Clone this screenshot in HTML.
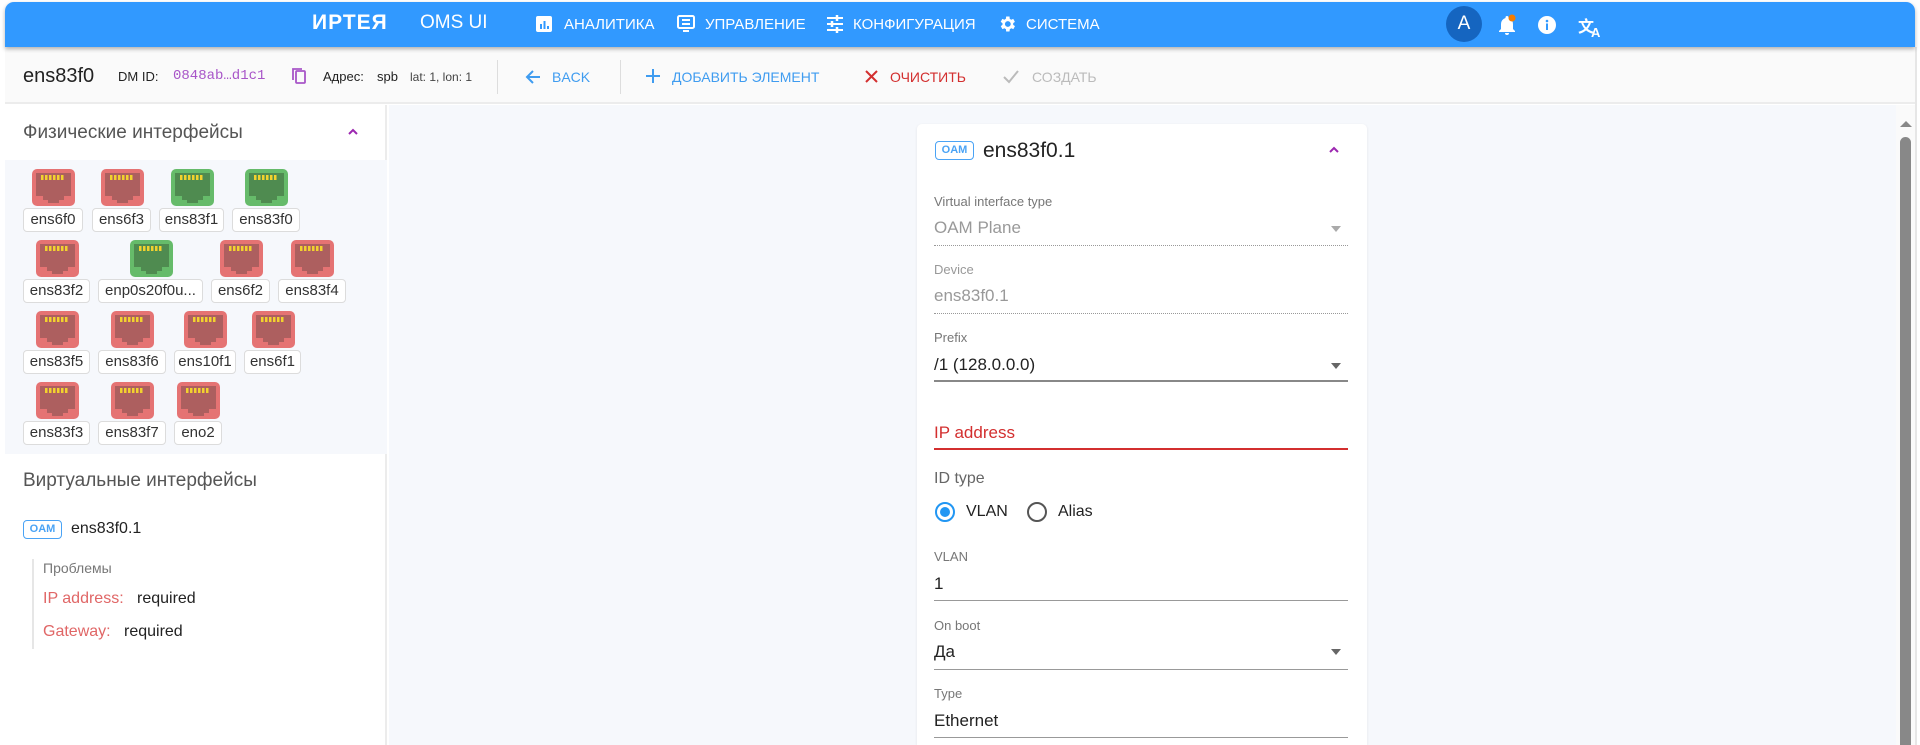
<!DOCTYPE html>
<html style="width:1920px;height:745px;overflow:hidden"><head><meta charset="utf-8"><style>
*{margin:0;padding:0;box-sizing:border-box}
body{width:1920px;height:745px;overflow:hidden;background:#fff;font-family:"Liberation Sans","Noto Sans CJK SC",sans-serif;position:relative;color:#222}
.a{position:absolute;white-space:nowrap}
.top{left:5px;top:2px;width:1910px;height:45px;background:#3199ff;border-radius:9px 9px 0 0;box-shadow:0 2px 4px rgba(0,0,0,.3);z-index:3}
.top .a{color:#fff}
.nav{font-size:15px;top:14px}
.tb{left:5px;top:47px;width:1910px;height:57px;background:#fafafa;border-bottom:2px solid #ececec}
.left{left:5px;top:105px;width:382px;height:640px;background:#fff;border-right:2px solid #ececec}
.main{left:389px;top:105px;width:1507px;height:640px;background:#f6f8fc}
.lbl{position:absolute;height:24px;border:1px solid #dcdcdc;border-radius:4px;background:#fff;font-size:15px;line-height:22px;text-align:center;color:#333}
.card{left:917px;top:124px;width:450px;height:621px;background:#fff;border-radius:5px 5px 0 0;box-shadow:0 1px 3px rgba(0,0,0,.08)}
.fl{font-size:13px;color:#777}
.fv{font-size:17px;color:#222}
.ln{position:absolute;left:934px;width:414px;height:1px;background:#999}
.badge{border:1px solid #4aa3f5;color:#4aa3f5;border-radius:4px;font-size:11px;text-align:center;font-weight:bold}
</style></head><body>
<div class="a top">
 <div class="a" style="left:307px;top:9px;font-size:21px;font-weight:bold;letter-spacing:1px">ИРТЕЯ</div>
 <div class="a" style="left:415px;top:10px;font-size:19px">OMS UI</div>
 <svg class="a" style="left:530px;top:13px" width="18" height="18" viewBox="0 0 18 18"><rect x="1" y="1" width="16" height="16" rx="2" fill="#fff"/><rect x="5" y="9" width="2" height="5" fill="#3199ff"/><rect x="8.5" y="6" width="2" height="8" fill="#3199ff"/><rect x="12" y="11" width="2" height="3" fill="#3199ff"/></svg>
 <div class="a nav" style="left:559px">АНАЛИТИКА</div>
 <svg class="a" style="left:671px;top:12px" width="20" height="20" viewBox="0 0 20 20"><rect x="2" y="2" width="16" height="12" rx="1.5" fill="none" stroke="#fff" stroke-width="2"/><path d="M6 6h8M6 10h8M7 17h6" stroke="#fff" stroke-width="2"/></svg>
 <div class="a nav" style="left:700px">УПРАВЛЕНИЕ</div>
 <svg class="a" style="left:820px;top:12px" width="20" height="20" viewBox="0 0 20 20"><path d="M2 4h16M2 10h16M2 16h16" stroke="#fff" stroke-width="2"/><path d="M12 1v6M7 7v6M12 13v6" stroke="#fff" stroke-width="2.5"/></svg>
 <div class="a nav" style="left:848px">КОНФИГУРАЦИЯ</div>
 <svg class="a" style="left:992px;top:12px" width="20" height="20" viewBox="0 0 24 24"><path fill="#fff" d="M19.4 13a7.5 7.5 0 000-2l2.1-1.6-2-3.5-2.5 1a7 7 0 00-1.7-1L15 3h-4l-.4 2.9a7 7 0 00-1.7 1l-2.5-1-2 3.5L6.6 11a7.5 7.5 0 000 2l-2.1 1.6 2 3.5 2.5-1a7 7 0 001.7 1L11 21h4l.4-2.9a7 7 0 001.7-1l2.5 1 2-3.5zM13 15.5a3.5 3.5 0 110-7 3.5 3.5 0 010 7z"/></svg>
 <div class="a nav" style="left:1021px">СИСТЕМА</div>
 <div class="a" style="left:1441px;top:4px;width:36px;height:36px;border-radius:50%;background:#1565c0;font-size:19px;line-height:36px;text-align:center">A</div>
 <svg class="a" style="left:1492px;top:12px" width="20" height="22" viewBox="0 0 20 22"><path fill="#fff" d="M10 2a1.5 1.5 0 011.5 1.5v.5A6 6 0 0116 10v5l2 2v1H2v-1l2-2v-5a6 6 0 014.5-6v-.5A1.5 1.5 0 0110 2zM8 19h4a2 2 0 01-4 0z"/><circle cx="15" cy="4" r="3.5" fill="#f57c00"/></svg>
 <svg class="a" style="left:1532px;top:13px" width="20" height="20" viewBox="0 0 20 20"><circle cx="10" cy="10" r="9" fill="#fff"/><rect x="9" y="8.5" width="2" height="6.5" fill="#3199ff"/><circle cx="10" cy="6" r="1.3" fill="#3199ff"/></svg>
 <div class="a" style="left:1573px;top:11px;font-size:16px;font-weight:bold">文<span style="font-size:13px;position:relative;top:5px;left:-3px">A</span></div>
</div>
<div class="a tb"></div>
<div class="a" style="left:23px;top:65px;font-size:20px">ens83f0</div>
<div class="a" style="left:118px;top:69px;font-size:13px">DM ID:</div>
<div class="a" style="left:173px;top:68px;font-size:14px;color:#a855c8;font-family:'Liberation Mono',monospace">0848ab…d1c1</div>
<svg class="a" style="left:291px;top:67px" width="16" height="18" viewBox="0 0 16 18"><rect x="5" y="4" width="9" height="12" rx="1" fill="none" stroke="#a855c8" stroke-width="1.8"/><path d="M2 13V2h9" fill="none" stroke="#a855c8" stroke-width="1.8"/></svg>
<div class="a" style="left:323px;top:69px;font-size:13px">Адрес:</div>
<div class="a" style="left:377px;top:69px;font-size:13px">spb</div>
<div class="a" style="left:410px;top:70px;font-size:12px;color:#444">lat: 1, lon: 1</div>
<div class="a" style="left:497px;top:60px;width:1px;height:34px;background:#ddd"></div>
<div class="a" style="left:620px;top:60px;width:1px;height:34px;background:#ddd"></div>
<svg class="a" style="left:524px;top:68px" width="18" height="18" viewBox="0 0 18 18"><path d="M16 9H3M9 3L3 9l6 6" fill="none" stroke="#3f9cf0" stroke-width="2"/></svg>
<div class="a" style="left:552px;top:69px;font-size:14px;color:#3f9cf0">BACK</div>
<svg class="a" style="left:645px;top:68px" width="16" height="16" viewBox="0 0 16 16"><path d="M8 1v14M1 8h14" stroke="#3f9cf0" stroke-width="2"/></svg>
<div class="a" style="left:672px;top:69px;font-size:14px;color:#3f9cf0">ДОБАВИТЬ ЭЛЕМЕНТ</div>
<svg class="a" style="left:864px;top:69px" width="15" height="15" viewBox="0 0 15 15"><path d="M2 2l11 11M13 2L2 13" stroke="#d32f2f" stroke-width="2"/></svg>
<div class="a" style="left:890px;top:69px;font-size:14px;color:#d32f2f">ОЧИСТИТЬ</div>
<svg class="a" style="left:1003px;top:69px" width="16" height="15" viewBox="0 0 16 15"><path d="M1 8l5 5L15 2" fill="none" stroke="#bbb" stroke-width="2"/></svg>
<div class="a" style="left:1032px;top:69px;font-size:14px;color:#bbb">СОЗДАТЬ</div>

<div class="a left"></div>
<div class="a" style="left:5px;top:160px;width:382px;height:294px;background:#f6f8fc"></div>
<div class="a" style="left:23px;top:122px;font-size:19px;color:#555">Физические интерфейсы</div>
<svg class="a" style="left:347px;top:127px" width="12" height="10" viewBox="0 0 12 10"><path d="M2 7l4-4 4 4" fill="none" stroke="#9c27b0" stroke-width="2"/></svg>
<div id="ifs"></div>
<div class="a" style="left:23px;top:470px;font-size:19px;color:#555">Виртуальные интерфейсы</div>
<div class="a badge" style="left:23px;top:520px;width:39px;height:19px;line-height:17px">OAM</div>
<div class="a" style="left:71px;top:520px;font-size:16px">ens83f0.1</div>
<div class="a" style="left:32px;top:559px;width:2px;height:90px;background:#e6e6e6"></div>
<div class="a" style="left:43px;top:560px;font-size:14px;color:#777">Проблемы</div>
<div class="a" style="left:43px;top:590px;font-size:16px;color:#e06666">IP address:</div>
<div class="a" style="left:137px;top:590px;font-size:16px">required</div>
<div class="a" style="left:43px;top:623px;font-size:16px;color:#e06666">Gateway:</div>
<div class="a" style="left:124px;top:623px;font-size:16px">required</div>

<div class="a main"></div>
<div class="a card"></div>
<div class="a badge" style="left:935px;top:141px;width:39px;height:19px;line-height:17px">OAM</div>
<div class="a" style="left:983px;top:139px;font-size:21px">ens83f0.1</div>
<svg class="a" style="left:1328px;top:145px" width="12" height="10" viewBox="0 0 12 10"><path d="M2 7l4-4 4 4" fill="none" stroke="#9c27b0" stroke-width="2"/></svg>
<div class="a fl" style="left:934px;top:194px">Virtual interface type</div>
<div class="a fv" style="left:934px;top:218px;color:#999">OAM Plane</div>
<div class="a" style="left:1331px;top:226px;border:5px solid transparent;border-top:6px solid #aaa"></div>
<div class="ln" style="top:245px;background:none;border-top:1px dotted #999"></div>
<div class="a fl" style="left:934px;top:262px;color:#999">Device</div>
<div class="a fv" style="left:934px;top:286px;color:#999">ens83f0.1</div>
<div class="ln" style="top:313px;background:none;border-top:1px dotted #999"></div>
<div class="a fl" style="left:934px;top:330px">Prefix</div>
<div class="a fv" style="left:934px;top:355px">/1 (128.0.0.0)</div>
<div class="a" style="left:1331px;top:363px;border:5px solid transparent;border-top:6px solid #666"></div>
<div class="ln" style="top:380px;height:2px;background:#888"></div>
<div class="a fv" style="left:934px;top:423px;color:#d32f2f">IP address</div>
<div class="ln" style="top:448px;height:2px;background:#d32f2f"></div>
<div class="a" style="left:934px;top:470px;font-size:16px;color:#666">ID type</div>
<div class="a" style="left:935px;top:502px;width:20px;height:20px;border:2px solid #2196f3;border-radius:50%"></div>
<div class="a" style="left:940px;top:507px;width:10px;height:10px;background:#2196f3;border-radius:50%"></div>
<div class="a" style="left:966px;top:503px;font-size:16px">VLAN</div>
<div class="a" style="left:1027px;top:502px;width:20px;height:20px;border:2px solid #555;border-radius:50%"></div>
<div class="a" style="left:1058px;top:503px;font-size:16px">Alias</div>
<div class="a fl" style="left:934px;top:549px">VLAN</div>
<div class="a fv" style="left:934px;top:574px">1</div>
<div class="ln" style="top:600px"></div>
<div class="a fl" style="left:934px;top:618px">On boot</div>
<div class="a fv" style="left:934px;top:642px">Да</div>
<div class="a" style="left:1331px;top:649px;border:5px solid transparent;border-top:6px solid #666"></div>
<div class="ln" style="top:669px"></div>
<div class="a fl" style="left:934px;top:686px">Type</div>
<div class="a fv" style="left:934px;top:711px">Ethernet</div>
<div class="ln" style="top:737px"></div>

<div class="a" style="left:1896px;top:105px;width:19px;height:640px;background:#fafafa"></div>
<div class="a" style="left:1915px;top:47px;width:2px;height:698px;background:#e6e6e6"></div>
<div class="a" style="left:1900px;top:121px;border:6px solid transparent;border-bottom:6px solid #888;border-top:0"></div>
<div class="a" style="left:1900px;top:137px;width:11px;height:608px;background:#888;border-radius:6px 6px 0 0"></div>

<script>
var rows=[[169,[["ens6f0",23,83,"r"],["ens6f3",92,151,"r"],["ens83f1",159,224,"g"],["ens83f0",232,300,"g"]]],
[240,[["ens83f2",23,90,"r"],["enp0s20f0u...",98,203,"g"],["ens6f2",211,270,"r"],["ens83f4",278,346,"r"]]],
[311,[["ens83f5",23,90,"r"],["ens83f6",98,166,"r"],["ens10f1",174,236,"r"],["ens6f1",244,301,"r"]]],
[382,[["ens83f3",23,90,"r"],["ens83f7",98,166,"r"],["eno2",174,222,"r"]]]];
var h="";
rows.forEach(function(r){var y=r[0];r[1].forEach(function(i){
var o=i[3]=="r"?"#e57373":"#66bb6a",n=i[3]=="r"?"#ad5f5f":"#4f8b50";
var cx=Math.round((i[1]+i[2])/2)-21;
h+='<svg class="a" style="left:'+cx+'px;top:'+y+'px" width="43" height="37" viewBox="0 0 43 37"><rect width="43" height="37" rx="5" fill="'+o+'"/><path d="M4 4h35v23h-7v4h-5v3h-11v-3h-5v-4h-7z" fill="'+n+'"/>';
for(var k=0;k<6;k++)h+='<rect x="'+(9+k*4)+'" y="6" width="2.5" height="5" fill="#f2d22e"/>';
h+='</svg><div class="lbl" style="left:'+i[1]+'px;top:'+(y+39)+'px;width:'+(i[2]-i[1])+'px">'+i[0]+'</div>';});});
document.getElementById("ifs").innerHTML=h;
</script>
</body></html>
